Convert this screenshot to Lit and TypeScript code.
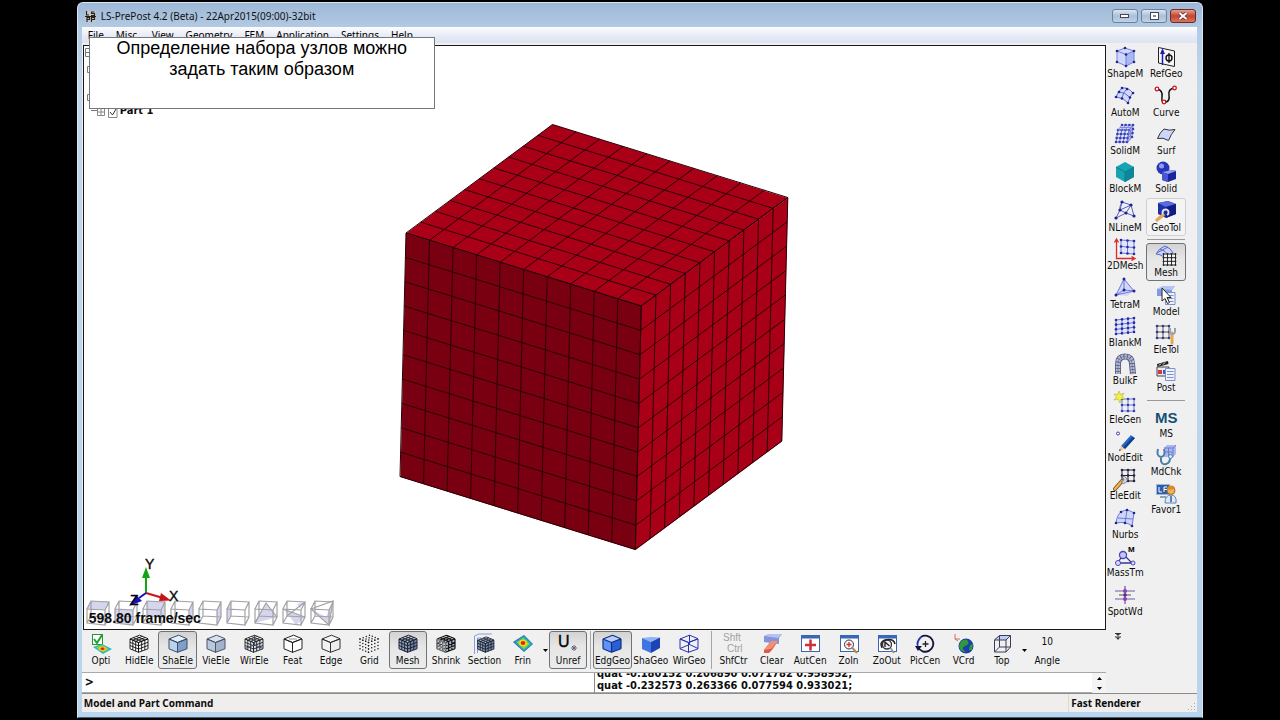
import { LitElement, html, svg, css, nothing } from "lit";
import { customElement, property, query } from "lit/decorators.js";
import { classMap } from "lit/directives/class-map.js";

type Pt = [number, number];

/* Lines of an n by m grid over the parallelogram at o spanned by u and v. */
const mesh = (o: Pt, u: Pt, v: Pt, n: number, m = n): string => {
  const out: string[] = [];
  for (let i = 0; i <= n; i++) {
    const x = o[0] + (u[0] * i) / n, y = o[1] + (u[1] * i) / n;
    out.push(`M${x.toFixed(2)} ${y.toFixed(2)}l${v[0]} ${v[1]}`);
  }
  for (let j = 0; j <= m; j++) {
    const x = o[0] + (v[0] * j) / m, y = o[1] + (v[1] * j) / m;
    out.push(`M${x.toFixed(2)} ${y.toFixed(2)}l${u[0]} ${u[1]}`);
  }
  return out.join("");
};

const dots = (pts: Pt[], fill = "#22228f", r = 1.3) =>
  pts.map((p) => svg`<circle cx=${p[0]} cy=${p[1]} r=${r} fill=${fill} />`);

const gridPts = (o: Pt, u: Pt, v: Pt, n: number, m = n): Pt[] => {
  const out: Pt[] = [];
  for (let i = 0; i <= n; i++)
    for (let j = 0; j <= m; j++)
      out.push([o[0] + (u[0] * i) / n + (v[0] * j) / m, o[1] + (u[1] * i) / n + (v[1] * j) / m]);
  return out;
};

const netIcon = (o: Pt, u: Pt, v: Pt, n: number, m = n, line = "#6d78d8", dot = "#22228f", fill = "none") => svg`
  <path d=${`M${o[0]} ${o[1]}l${u[0]} ${u[1]}l${v[0]} ${v[1]}l${-u[0]} ${-u[1]}z`} fill=${fill} />
  <path d=${mesh(o, u, v, n, m)} fill="none" stroke=${line} />
  ${dots(gridPts(o, u, v, n, m), dot)}`;

const box = (top: string, left: string, right: string, line: string, n = 1, w = 1) => svg`
  <path d="M12.5 3L21 7L11.5 10.5L3 7z" fill=${top} />
  <path d="M3 7L11.5 10.5V20.5L3 16.5z" fill=${left} />
  <path d="M21 7L11.5 10.5V20.5L21 16.5z" fill=${right} />
  <path d=${mesh([3, 7], [8.5, 3.5], [0, 9.8], n) + mesh([11.5, 10.5], [9.5, -3.5], [0, 9.8], n) + mesh([3, 7], [8.5, 3.5], [9.5, -3.8], n)}
    fill="none" stroke=${line} stroke-width=${w} stroke-linejoin="round" />`;

const wrench = svg`<path d="M3 21L10 13" stroke="#7b4c12" stroke-width="4" stroke-linecap="round" />
  <path d="M3 21L10 13" stroke="#f0b45a" stroke-width="2.4" stroke-linecap="round" />
  <path d="M9 14a3.4 3.4 0 1 0 1-5l2 2-1 2z" fill="#d5d9e2" stroke="#667" stroke-width=".8" />`;

const frame = svg`<rect x="3.5" y="3.5" width="18" height="16" fill="#fff" stroke="#3c63ad" />
  <rect x="3" y="3" width="19" height="3.5" fill="#3767b8" />`;

const sheet = svg`<path d="M11.5 9.5h9.5v12h-9.5z" fill="#eef2fd" stroke="#7d91cc" />
  <path d="M13 12.5h6.500M13 15.500h6.500M13 18.500h6.500" stroke="#7d91cc" />`;

const icons: Record<string, unknown> = {
  ShapeM: svg`<path d="M4 6L12 3L21 6V17L13 21L4 17z" fill="#cfd8fb" /><path d="M13 9.500L21 6V17L13 21z" fill="#a9b7f2" />
    <path d="M4 6L12 3L21 6L13 9.500zM4 6V17L13 21L21 17V6M13 9.500V21" fill="none" stroke="#7582dd" />
    ${dots([[4, 6], [12, 3], [21, 6], [13, 9.5], [4, 17], [13, 21], [21, 17]])}`,
  AutoM: svg`<path d="M3 13Q6 6 9 4Q15 3 20 9Q17 11 15 19Q10 13 3 13z" fill="#d0d8fb" />
    <path d="M3 13Q6 6 9 4Q15 3 20 9Q17 11 15 19Q10 13 3 13zM6 8Q12 8 17 13.500M9 14Q10 8 14 5" fill="none" stroke="#5f6acb" />
    ${dots([[3, 13], [9, 4], [20, 9], [15, 19], [6, 8], [14, 5], [9, 14.5], [17, 13.5]])}`,
  SolidM: svg`<path d="M9 3H21L20 14L15 20H3L5 8z" fill="#dfe4fb" />
    ${netIcon([5, 8], [11, 0], [-2, 12], 3, 3, "#6d78d8", "#3a3fb0")}
    <path d=${mesh([5, 8], [11, 0], [4, -5], 3, 2) + mesh([16, 8], [4, -5], [-1, 12], 2, 3)} fill="none" stroke="#6d78d8" stroke-width=".8" />
    ${dots([[9, 3], [12.7, 3], [16.4, 3], [20, 3], [20, 7], [19.5, 11], [19, 15]], "#3a3fb0")}`,
  BlockM: svg`<path d="M12 2L21 7V17L12 22L3 17V7z" fill="#17a4b2" /><path d="M12 12L21 7V17L12 22z" fill="#0d8797" />
    <path d="M3 7L12 12L21 7M12 12V22" fill="none" stroke="#0f7f90" />`,
  NLineM: svg`<path d="M9 3L18 6L21 17L13 14L3 19L7 11zM7 11L18 6M7 11L13 14L18 6M9 3Q6 8 7 11" fill="none" stroke="#5660c8" />
    ${dots([[9, 3], [18, 6], [21, 17], [13, 14], [3, 19], [7, 11]], "#22228f", 1.6)}`,
  "2DMesh": svg`<g transform="translate(1 -1)">${netIcon([7, 4], [13, 1], [0, 13], 2, 2, "#6d78d8", "#2a2aa0", "#e2e6fc")}</g>
    <path d="M3.500 3V21.500H21M1.500 5.500L3.500 2L5.500 5.500M18.500 19.500L22 21.500L18.500 23.500" fill="none" stroke="#e02a2a" stroke-width="1.300" />`,
  TetraM: svg`<path d="M11 3L21 15L14 20L3 19z" fill="#d0d8fb" /><path d="M11 3L3 19L21 15zL11 14L3 19M11 14L21 15" fill="none" stroke="#6d78d8" />
    ${dots([[11, 3], [3, 19], [21, 15], [11, 14]], "#22228f", 1.5)}`,
  BlankM: netIcon([3, 6], [18, -2], [0, 14], 3, 3, "#6d78d8", "#2a2aa0", "#dfe4fb"),
  BulkF: svg`<path d="M5 22L5 12Q5 4.500 12 4.500T19 12L20 22" fill="none" stroke="#55597a" stroke-width="6" />
    <path d="M5 22L5 12Q5 4.500 12 4.500T19 12L20 22" fill="none" stroke="#b3b9d6" stroke-width="4.400" stroke-dasharray="2.200 .8" />
    <path d="M5 22L5 12Q5 4.500 12 4.500T19 12L20 22" fill="none" stroke="#6a6f92" stroke-width=".6" />`,
  EleGen: svg`${netIcon([9, 8], [12, 0], [0, 12], 2, 2, "#6d78d8", "#3a3fb0")}
    <path d="M6 0L7.500 3.500L11 2L9 5.500L12 8L8 8L7 12L5 8L1 9L3.500 6L1 3L5 3.500z" fill="#f3f046" stroke="#a7b13a" stroke-width=".6" />`,
  NodEdit: svg`<path d="M8 17L18 6L22 9L12 20z" fill="#2368c8" /><path d="M10 18.500L20 7.500L22 9L12 20z" fill="#12418c" />
    <path d="M18 6L19.500 4.500L23 7.500L22 9z" fill="#e8eef8" /><path d="M8 17L6 22L12 20z" fill="#f5c98c" /><path d="M6 22l.8-2 1.200 1.300z" fill="#222" />
    <circle cx="5" cy="4.500" r="1.500" fill="#fff" stroke="#3a3fb0" />`,
  EleEdit: svg`${netIcon([9, 3], [12, 0], [0, 11], 2, 2, "#222", "#22224f")}<g transform="translate(-1 1)">${wrench}</g>`,
  Nurbs: svg`<path d="M8 6Q14 2 21 7L19 20Q13 15 3 17Q4 9 8 6z" fill="#ced7fa" /><path d="M8 6Q14 2 21 7L19 20Q13 15 3 17Q4 9 8 6zM5 12L20 13M14 4L12 17" fill="none" stroke="#6d78d8" />
    ${dots([[8, 6], [21, 7], [19, 20], [3, 17], [12, 17], [14, 4]])}`,
  MassTm: svg`<path d="M10 10L5 19H19L10 10" fill="none" stroke="#333a8c" stroke-width="1.300" />
    <circle cx="10" cy="11" r="3.500" fill="#c5c8fb" stroke="#4a42c0" stroke-width="1.300" /><circle cx="5" cy="19" r="2.500" fill="#dcdcff" stroke="#4a42c0" /><circle cx="20" cy="19" r="2" fill="#dcdcff" stroke="#4a42c0" />
    <text x="15" y="8" font-family="Liberation Sans" font-weight="700" font-size="8">M</text>`,
  SpotWd: svg`<path d="M2 8H22M2 16H22" stroke="#9a8fc4" stroke-width="1.500" /><path d="M6 12H18" stroke="#555" />
    <path d="M12 3V21" stroke="#5a2a86" /><circle cx="12" cy="8" r="2" fill="#8a3fb5" /><circle cx="12" cy="12" r="1.800" fill="#5a2a86" /><circle cx="12" cy="16" r="2" fill="#8a3fb5" />`,
  RefGeo: svg`<path d="M4.500 2.500L20.500 6V21.500L4.500 18z" fill="#f6f6f6" stroke="#222" /><path d="M8.500 20V5" stroke="#1c1cb4" stroke-width="1.500" /><path d="M6 9L8.500 3.500L11 9z" fill="#1c1cb4" />
    <ellipse cx="15" cy="13" rx="3" ry="3" fill="none" stroke="#111" stroke-width="1.400" /><path d="M15 8V18" stroke="#111" stroke-width="1.300" />`,
  Curve: svg`<path d="M3 5Q9 6 8 13T12 18Q16 17 15 11T20 4" fill="none" stroke="#111" stroke-width="1.500" />
    ${[[3, 5], [10, 18], [20.5, 4]].map((p) => svg`<circle cx=${p[0]} cy=${p[1]} r="1.800" fill="#fff" stroke="#c4161c" stroke-width="1.300" />`)}`,
  Surf: svg`<path d="M3.500 16.500Q6 10 10 7Q15 9 21 7.500Q17 12 14.500 18.500Q9 15 3.500 16.500z" fill="#cdd5fa" stroke="#333" />`,
  Solid: svg`<circle cx="9" cy="8" r="6.500" fill="#2634b8" /><circle cx="7.500" cy="6" r="2.500" fill="#8f9cf2" />
    <path d="M8 12L19 10L22 11V19L14 22L8 20z" fill="#1a259c" /><path d="M8 12L19 10L22 11L14 14z" fill="#96a2f0" /><path d="M8 12L14 14V22L8 20z" fill="#4756d4" />`,
  GeoTol: svg`<path d="M4 4L14 2L22 5V15L12 19L4 15z" fill="#2230a8" /><path d="M4 4L14 2L22 5L12 8z" fill="#5a6be0" /><path d="M12 8L22 5V15L12 19z" fill="#141d84" />
    <path d="M3 21L9 16" stroke="#e0a958" stroke-width="3.500" stroke-linecap="round" /><path d="M9 15a3 3 0 1 1 4 1" fill="none" stroke="#dfe4f2" stroke-width="2" />`,
  Mesh: svg`<path d="M2 10Q5 4 11 2Q17 4 19 9L10 13Q6 10 2 10z" fill="#cbd4fb" stroke="#5f6acb" /><path d="M6 5Q12 7 14 11M3 9L14 3" fill="none" stroke="#5f6acb" />
    <path d="M9 9.500H22V21.500H9z" fill="#f4f4f8" /><path d=${mesh([9.5, 10], [12, 0], [0, 11], 3)} fill="none" stroke="#333" />${dots(gridPts([9.5, 10], [12, 0], [0, 11], 3), "#222", 0.9)}`,
  Model: svg`<path d="M3 6L9 3H21L18 7V13H3z" fill="#7f9be6" /><path d="M3 6L9 3H21L18 7z" fill="#b5c6f4" />${sheet}
    <path d="M8 5V18L11 15.500L13.500 20.500L15.500 19.500L13 14.500H17z" fill="#fff" stroke="#222" />`,
  EleTol: svg`${netIcon([3, 5], [12, 0], [0, 12], 2, 2, "#555", "#333a8c")}<path d="M18 12V22" stroke="#e2a94f" stroke-width="3" stroke-linecap="round" />
    <path d="M16 7V10.500A2.500 2.500 0 0 0 21 10.500V7" fill="none" stroke="#9aa0b0" stroke-width="2" />`,
  Post: svg`<path d="M3 5L14 2L14.500 5L3.500 8z" fill="#222" /><path d="M5 6.500l2-2M9 5.500l2-2" stroke="#fff" /><path d="M3 8H15V17H3z" fill="#e8e8ee" stroke="#444" />
    <rect x="4" y="11" width="4" height="4" fill="#d43a3a" /><rect x="9" y="11" width="3" height="4" fill="#3a58d4" />${sheet}`,
  MS: svg`<text x="1" y="18" font-family="Liberation Sans" font-weight="700" font-size="15" fill="#16517a">MS</text>`,
  MdChk: svg`<path d="M10 5L13 2H22V11L19 14H10z" fill="#a9b8f0" /><path d="M10 5H19V14M19 5L22 2M14.500 5V14M10 9H19" fill="none" stroke="#6d7bd0" />
    <path d="M4 6Q2 13 7 14Q12 13 10 6M7 14V18Q8 22 12 21T16 15" fill="none" stroke="#4d7fa6" stroke-width="2" /><circle cx="16.500" cy="13.500" r="2" fill="#dbe9f4" stroke="#4d7fa6" />`,
  Favor1: svg`<rect x="2.500" y="3.500" width="13" height="10" fill="#2f5ea8" stroke="#9fb6dc" /><path d="M5 6V11H8M10 11V6H13M10 8.500H13" fill="none" stroke="#fff" />
    <path d="M6 16H12" stroke="#8aa" stroke-width="2" /><path d="M11 22Q11 14 17 14T22 22z" fill="#dfe9f6" stroke="#5e83b8" /><circle cx="17" cy="9.500" r="4" fill="#f2b05a" stroke="#a9671a" /><path d="M13 9Q13 4.500 17 4.500T21 8z" fill="#d88a2a" /><path d="M17 15V21" stroke="#2f5ea8" stroke-width="1.500" />`,

  Opti: svg`<rect x="3.500" y="2.500" width="10" height="10" fill="#fff" stroke="#2c8f3c" /><path d="M5 7L8 11L13 3" fill="none" stroke="#1fa52e" stroke-width="2" />
    <path d="M4 15L13 12L23 17L14 22z" fill="#25b8c8" /><path d="M7 15.500L13 13L20 17L14 20.500z" fill="#7ddc3a" /><ellipse cx="13.500" cy="16.800" rx="4" ry="2.200" fill="#f6c31c" /><ellipse cx="13.500" cy="16.800" rx="2" ry="1.200" fill="#e0261c" />`,
  HidEle: box("#fff", "#fff", "#fff", "#111", 3, 0.9),
  ShaEle: box("#e4effc", "#bcd3ef", "#7d9fca", "#3c4c66"),
  VieEle: box("#d9e3f0", "#b9c8dc", "#a2b4cd", "#4a5466"),
  WirEle: svg`${box("#fff", "#e4e8f0", "#d4dae8", "#222", 3, 0.9)}<path d="M3 16.500L12.500 13L21 16.500M12.500 3V13" fill="none" stroke="#44506e" />`,
  Feat: svg`${box("#fff", "#fff", "#fff", "#222")}<path d="M8 7H16" stroke="#777" stroke-width=".8" />`,
  Edge: box("#f6f6f6", "#f2f2f2", "#eee", "#333"),
  Grid: svg`${dots([...gridPts([3, 7], [8.5, 3.5], [0, 9.8], 3), ...gridPts([11.5, 10.5], [9.5, -3.5], [0, 9.8], 3), ...gridPts([3, 7], [8.5, 3.5], [9.5, -3.8], 3)], "#1a1a1a", 0.75)}`,
  MeshView: box("#cfd6e2", "#93a3bd", "#7487a8", "#1c2434", 3),
  Shrink: svg`${box("#e8ebf0", "#c4cad6", "#aab3c4", "#111", 3, 1.2)}<path d=${mesh([3, 7], [8.5, 3.5], [0, 9.8], 3)} fill="none" stroke="#fff" stroke-width=".4" />`,
  Section: svg`<path d="M2.500 22V4L7 2H20M5.500 21V6H9M2.500 4V22" fill="none" stroke="#8f9ad8" /><g transform="translate(3 2) scale(.9)">${box("#cfd6e2", "#93a3bd", "#7487a8", "#1c2434", 3)}</g>`,
  Frin: svg`<path d="M2 10L13 3L22 12L13 20z" fill="#2d62d4" /><path d="M3.500 10L13 4L21 12L13 19z" fill="#22b5a5" /><path d="M6 10.500L12.500 6L18.500 12L13 17z" fill="#8fdc2e" /><ellipse cx="12" cy="11" rx="4" ry="3.300" fill="#f7d51d" /><ellipse cx="12" cy="11" rx="2.300" ry="1.900" fill="#e1251b" />`,
  Unref: svg`<text x="2" y="15" font-family="Liberation Sans" font-size="16" stroke="#111" stroke-width=".4">U</text><path d="M18 13V19M15 16H21M16 14L20 18M20 14L16 18" stroke="#667" />`,
  EdgGeo: box("#b7ccff", "#5f92fa", "#2b5fd8", "#13307e", 1, 1.2),
  ShaGeo: svg`<g transform="translate(0 1)"><path d="M3 5L12 4L21 4.500L12 9z" fill="#8fb2f6" /><path d="M3 5L12 9V20L3 16z" fill="#3f74e2" /><path d="M21 4.500L12 9V20L21 15z" fill="#1c45b4" /></g>`,
  WirGeo: svg`${box("none", "none", "none", "#2733b4")}<path d="M3 16.500L12.500 12.500L21 16.500M12.500 3V12.500" fill="none" stroke="#2733b4" />`,
  ShfCtr: svg`<g font-family="Liberation Sans" font-size="10" fill="#a2a2a2"><text x="2" y="9">Shft</text><text x="6" y="20">Ctrl</text></g>`,
  Clear: svg`<path d="M4 4L9 2H22L19 6V12L4 10z" fill="#8294dc" /><path d="M4 4L9 2H22L18 6z" fill="#b6c2f0" /><path d="M4 18L11 9H18L12 18L9 21H4z" fill="#e0583e" /><path d="M4 18L11 9H18L11 17z" fill="#f09078" />`,
  AutCen: svg`${frame}<path d="M12.500 7.500V18.500M7 13H18" stroke="#d22c38" stroke-width="2.500" />`,
  ZoIn: svg`${frame}<circle cx="12" cy="12.500" r="4.500" fill="#f8f8ff" stroke="#333" /><path d="M12 10V15M9.500 12.500H14.500" stroke="#d22c38" stroke-width="1.300" /><path d="M15.500 16L20 21" stroke="#b88948" stroke-width="2" />`,
  ZoOut: svg`${frame}<circle cx="12" cy="12.500" r="4.500" fill="#eef" stroke="#333" stroke-width="1.300" /><path d="M7 16Q4 10 10 8Q19 6 20 12" fill="none" stroke="#222" stroke-width="1.600" /><path d="M10 15V10L14.500 14" fill="none" stroke="#222" stroke-width="1.400" /><path d="M15.500 16L19 21" stroke="#999" stroke-width="2" />`,
  PicCen: svg`<path d="M5 15A8 8 0 1 0 8 5" fill="none" stroke="#15153c" stroke-width="1.800" /><path d="M5 15Q3 10 8 5" fill="none" stroke="#2733b4" stroke-width="1.800" /><path d="M2 14H9L5 19z" fill="#15153c" /><path d="M12.500 9V15M9.500 12H15.500" stroke="#222" stroke-width="1.300" />`,
  VCrd: svg`<path d="M3 2V7H8M3 7L6 9" fill="none" stroke="#e0685c" /><circle cx="14" cy="14" r="7.500" fill="#1a3fa8" /><path d="M9 9Q14 6 16 9T13 14T14 20Q8 20 7 14zM18 13L21 12L20 18L17 18z" fill="#2f9a3c" />`,
  Top: svg`<path d="M4 7L10 3H20L16 8H4z" fill="#c2cbf6" /><path d="M4.500 8H16V20H4.500zM4.500 8L9.500 3.500H20.500L16 8M20.500 3.500V15L16 20M9.500 3.500V15H20.500M9.500 15L4.500 20" fill="none" stroke="#3a3f58" />`,
};

@customElement("tool-button")
class ToolButton extends LitElement {
  @property() label = "";
  @property() icon = "";
  @property({ type: Boolean }) active = false;
  @property({ type: Boolean }) hover = false;

  static styles = css`
    :host { display: block; min-width: 0; }
    .tool {
      box-sizing: border-box; width: 100%; height: 100%; margin: 0; padding: 0 0 2px;
      display: flex; flex-direction: column; align-items: center; justify-content: center;
      border: 1px solid transparent; border-radius: 3px; background: none; color: #0c0c0c;
      font: 10px/10px "DejaVu Sans Condensed", "DejaVu Sans", sans-serif; font-stretch: condensed; white-space: nowrap;
    }
    .icon { width: 24px; height: 24px; flex: none; }
    .active { border-color: #6f7276; background: linear-gradient(#d3d3d3, #e6e6e6 40%, #ececec); }
    .hover { border-color: #cfcfcf; background: #f4f4f4; }
    .number { font: inherit; height: 24px; line-height: 20px; }
  `;

  render() {
    const art = icons[this.icon || this.label];
    return html`<button class=${classMap({ tool: true, active: this.active, hover: this.hover })}>
      ${art
        ? html`<svg class="icon" viewBox="0 0 24 24" aria-hidden="true">${art}</svg>`
        : html`<span class="number">10</span>`}
      <span>${this.label}</span>
    </button>`;
  }
}

@customElement("app-root")
class AppRoot extends LitElement {
  @query(".log") log!: HTMLTextAreaElement;

  static styles = css`
    :host { display: block; height: 100vh; background: #000; color: #0c0c0c; --pitch: calc((100vh - 144px) / 15); }
    * { box-sizing: border-box; }
    button { font: inherit; }
    .stage { height: 100%; padding: 2px 6%; position: relative; }
    .window {
      height: 100%; display: flex; flex-direction: column; padding: 0 5px 5px 4px; border-radius: 6px 6px 0 0;
      background: linear-gradient(#9db8d6, #b4cbe4 26px, #c3d6ea 80px, #b9d4ec); border: 1px solid #d7e6f3; border-bottom-color: #48607a;
    }
    .titlebar { flex: none; height: 24px; display: flex; align-items: center; gap: 5px; padding: 2px 1px 0 3px; font: 10px/16px "Noto Sans", sans-serif; color: #111; }
    .title { flex: 1; }
    .logo { width: 11px; height: 11px; }
    .controls { display: flex; gap: 3px; }
    .control { width: 26px; height: 14px; padding: 0; border: 1px solid #6b819c; border-radius: 3px; background: linear-gradient(#dbe7f3, #a9c0d8 50%, #bfd2e6); display: grid; place-items: center; }
    .close { background: linear-gradient(#e3a195, #c4452f 50%, #d87660); border-color: #6d2a24; }
    .menus { flex: none; height: 16px; display: flex; gap: 12px; padding: 0 6px; background: linear-gradient(#fdfdfe, #e6eaf6 60%, #dde3f1); font: 10px/16px "Noto Sans", sans-serif; }
    .menus button { border: 0; padding: 0; background: none; line-height: 16px; }
    .body { flex: 1; min-height: 0; display: grid; grid-template-columns: 1fr 91px; background: #f0f0f0; }
    .work { min-width: 0; min-height: 0; display: flex; flex-direction: column; padding-top: 2px; }
    .viewport { flex: 1; min-height: 0; margin-left: 1px; position: relative; display: grid; place-items: center; background: #fff; border: 1px solid #1a1a1a; overflow: hidden; }
    .solid { height: 432px; max-height: 90%; }
    .axes { position: absolute; left: 41px; bottom: 17px; width: 60px; height: 56px; }
    .tree { position: absolute; left: 0; top: 0; width: 40px; height: 76px; }
    .part { position: absolute; left: 36px; top: 57px; font: 700 11px/16px "DejaVu Sans Condensed", "DejaVu Sans", sans-serif; font-stretch: condensed; white-space: nowrap; }
    .views { position: absolute; left: 1px; bottom: 2px; display: flex; gap: 2px; }
    .views button { width: 26px; height: 28px; padding: 0; border: 0; background: none; }
    .fps { position: absolute; left: 5px; bottom: 3px; font: 700 14px/16px "Liberation Sans", sans-serif; }
    .bar { flex: none; height: 42px; display: flex; padding: 1px 40px 3px 0; }
    .bar tool-button { flex: 1 1 0; }
    .drop { flex: none; width: 7px; padding: 0; border: 0; background: none; display: grid; place-items: center; }
    .rule { flex: none; width: 6px; display: grid; justify-content: center; }
    .rule i { width: 1px; background: #a6a6a6; }
    .command { flex: none; height: 21px; display: grid; grid-template-columns: 1fr 1fr; border-top: 1px solid #a9a9a9; border-bottom: 1px solid #a9a9a9; background: #fff; }
    .prompt { display: flex; align-items: center; min-width: 0; padding: 0 0 2px 3px; gap: 3px; font: 700 12px/16px "DejaVu Sans Condensed", "DejaVu Sans", sans-serif; }
    .prompt input { flex: 1; min-width: 0; border: 0; outline: 0; background: none; font: inherit; }
    .output { display: flex; border-left: 1px solid #8c8c8c; min-width: 0; }
    .log { flex: 1; min-width: 0; height: 19px; resize: none; border: 0; outline: 0; padding: 0 2px; overflow: hidden; background: #fff; color: #0c0c0c; white-space: pre; font: 700 11px/12px "DejaVu Sans Condensed", "DejaVu Sans", sans-serif; font-stretch: condensed; }
    .spin { width: 14px; display: grid; background: #f4f4f4; }
    .spin button { border: 0; padding: 0; background: none; display: grid; place-items: center; }
    .status { flex: none; height: 19px; display: flex; align-items: center; padding: 0 2px; border-top: 1px solid #8c8c8c; background: #f0eeec; font: 700 10px/18px "Noto Sans", sans-serif; position: relative; }
    .status-main { flex: 1; }
    .status-side { width: 127px; padding-left: 2px; border-left: 1px solid #d9d9d9; }
    .grip { position: absolute; right: 1px; bottom: 1px; width: 8px; height: 8px; }
    .side { display: grid; grid-template-columns: 38px 40px; gap: 2px; align-content: start; padding-top: 1px; }
    .column { display: flex; flex-direction: column; }
    .column tool-button { height: var(--pitch); flex: none; }
    .hrule { height: 7px; display: grid; align-items: center; }
    .hrule i { height: 1px; background: #9a9a9a; margin: 0 1px; }
    .more { border: 0; background: none; padding: 12px 0 0; width: 24px; }
    .more svg { display: block; margin: 0 auto; }
    .note {
      position: absolute; left: calc(6% + 12px); top: 37px; width: 346px; height: 72px; margin: 0; padding: 0 20px;
      border: 1px solid #777; background: #fff; color: #000; text-align: center; font: 18px/21px "Liberation Sans", sans-serif;
    }
  `;

  firstUpdated() {
    this.log.scrollTop = this.log.scrollHeight;
  }

  private tools(names: string[], active: string[] = [], hover = "") {
    return names.map((n) => {
      if (n === "|") return html`<span class="rule"><i></i></span>`;
      if (n === "-") return html`<span class="hrule"><i></i></span>`;
      if (n === "v")
        return html`<button class="drop" aria-label="More"><svg width="5" height="3"><path d="M0 0H5L2.500 3z" /></svg></button>`;
      const [label, icon] = n.split(":");
      return html`<tool-button label=${label} icon=${icon ?? ""} ?active=${active.includes(label)} ?hover=${hover === label}></tool-button>`;
    });
  }

  private model() {
    const r: Pt = [146.5, -108.5], f: Pt = [235.3, 73], d: Pt = [-6, 243.5];
    return html`<svg class="solid" viewBox="399 122 392 432" role="img" aria-label="Part 1">
      <path d="M406 233.500L552.500 124.500L788 198L641.500 306z" fill="#a90018" />
      <path d="M406 233.500L641.500 306L635.500 550L400.500 477z" fill="#790011" />
      <path d="M641.500 306L788 198L782 441.500L635.500 550z" fill="#a80017" />
      <path d=${mesh([406, 233], r, f, 10) + mesh([406, 233], f, d, 10) + mesh([641.3, 306], r, d, 10)} fill="none" stroke="#2a0006" stroke-width="1" />
    </svg>`;
  }

  private views() {
    const shade = [
      "M3 10L7 2H25L21 11z", "M3 10V24L21 26V11z", "M7 2H25V18L7 17z", "M21 11L25 2V18L21 26z", "M21 11L25 2V18L21 26z",
      "M3 10L7 2V17L3 24z", "M3 24L14 4L25 18z", "M3 10L25 18L16 26L7 14zM17 5L24 3L20 9z", "M3 10L21 25L25 2L18 18z",
    ];
    return shade.map(
      (s, i) => html`<button aria-label=${`View ${i + 1}`}><svg width="26" height="28" viewBox="2 0 24 28">
        <path d=${s} fill="#d5d5ee" />
        <path d="M3 10L21 11V26L3 24zM3 10L7 2L25 3L21 11M25 3V18L21 26M7 2V17L25 18M7 17L3 24" fill="none" stroke="#a2a2a6" stroke-width="1.200" />
        ${i > 5 ? svg`<path d=${["M3 24L14 4L25 18", "M3 10L25 18M7 17L25 3", "M3 10L25 2L21 26z"][i - 6]} fill="none" stroke="#a2a2a6" stroke-width="1.200" />` : nothing}
      </svg></button>`
    );
  }

  render() {
    return html`<div class="stage">
      <div class="window">
        <header class="titlebar">
          <svg class="logo" viewBox="0 0 11 11" aria-hidden="true"><path d="M0 0H11V11H0z" fill="#c9c9c4" /><path d="M1.500 0V4H4M9.500 1H6.500V2.500H9.500V4.500H6M2 11V6.500H4.500V8.500H2M6.500 11V6.500H9.500V8.500H6.500M0 5.500H11" fill="none" stroke="#222" stroke-width="1.200" /></svg>
          <span class="title">LS-PrePost 4.2 (Beta) - 22Apr2015(09:00)-32bit</span>
          <div class="controls">
            <button class="control" aria-label="Minimize"><svg width="10" height="6"><rect x=".5" y="1.500" width="8" height="3" fill="#fff" stroke="#445" /></svg></button>
            <button class="control" aria-label="Maximize"><svg width="9" height="8"><rect x=".5" y=".5" width="8" height="7" fill="#fff" stroke="#445" /><rect x="3" y="3" width="3" height="2" fill="#889" /></svg></button>
            <button class="control close" aria-label="Close"><svg width="10" height="8"><path d="M1.500 1L8.500 7M8.500 1L1.500 7" stroke="#5a3030" stroke-width="3.500" /><path d="M1.500 1L8.500 7M8.500 1L1.500 7" stroke="#fff" stroke-width="2" /></svg></button>
          </div>
        </header>
        <nav class="menus">
          ${["File", "Misc.", "View", "Geometry", "FEM", "Application", "Settings", "Help"].map((m) => html`<button>${m}</button>`)}
        </nav>
        <div class="body">
          <main class="work">
            <section class="viewport">
              ${this.model()}
              <svg class="tree" viewBox="0 0 40 76" aria-hidden="true">
                <path d="M1.500 2.500H8M1.500 6.500H8M1.500 2.500V10.500H8M3.500 20.500H8V26.500H3.500zM3.500 48.500H8V54.500H3.500zM7 64.500H14" fill="none" stroke="#777" />
                <path d="M13.500 62.500H20.500V69.500H13.500zM17 63V69M14 66H20M24.500 63V71.500H33V63" fill="none" stroke="#888" /><path d="M26 66L28.500 69L32 63" fill="none" stroke="#333" />
              </svg>
              <span class="part">Part 1</span>
              <div class="views">${this.views()}</div>
              <svg class="axes" viewBox="0 0 60 56" aria-hidden="true">
                <path d="M21 37V20" stroke="#12a512" stroke-width="2" /><path d="M17 22L21 11L25 22z" fill="#12a512" />
                <path d="M21 37L38 42" stroke="#c81414" stroke-width="2" /><path d="M36 37L46 44.500L34 45z" fill="#c81414" />
                <path d="M21 37L14 42" stroke="#1414b4" stroke-width="2" /><path d="M4 50L11 39L17 45z" fill="#1414b4" />
                <g font-family="Liberation Sans" font-size="14" stroke="#111" stroke-width=".4"><text x="20" y="13">Y</text><text x="44" y="45">X</text><text x="5" y="49">Z</text></g>
              </svg>
              <span class="fps">598.80 frame/sec</span>
            </section>
            <div class="bar">
              ${this.tools(
                ["Opti", "HidEle", "ShaEle", "VieEle", "WirEle", "Feat", "Edge", "Grid", "Mesh:MeshView", "Shrink", "Section", "Frin", "v", "Unref", "|",
                  "EdgGeo", "ShaGeo", "WirGeo", "|", "ShfCtr", "Clear", "AutCen", "ZoIn", "ZoOut", "PicCen", "VCrd", "Top", "v", "Angle"],
                ["ShaEle", "Mesh", "Unref", "EdgGeo"]
              )}
            </div>
            <div class="command">
              <label class="prompt">&gt;<input type="text" aria-label="Command" /></label>
              <div class="output">
                <textarea class="log" readonly aria-label="Command log" .value=${"quat -0.180152 0.206890 0.071782 0.958952;\nquat -0.232573 0.263366 0.077594 0.933021;"}></textarea>
                <div class="spin">
                  <button aria-label="Scroll up"><svg width="5" height="3"><path d="M0 3H5L2.500 0z" /></svg></button>
                  <button aria-label="Scroll down"><svg width="5" height="3"><path d="M0 0H5L2.500 3z" /></svg></button>
                </div>
              </div>
            </div>
          </main>
          <aside class="side">
            <div class="column">
              ${this.tools(["ShapeM", "AutoM", "SolidM", "BlockM", "NLineM", "2DMesh", "TetraM", "BlankM", "BulkF", "EleGen", "NodEdit", "EleEdit", "Nurbs", "MassTm", "SpotWd"])}
              <button class="more" aria-label="More tools"><svg width="6" height="8"><path d="M0 1.500H6M0 5H6" stroke="#333" /><path d="M1 2H5L3 4zM1 5.500H5L3 8z" fill="#333" /></svg></button>
            </div>
            <div class="column">
              ${this.tools(["RefGeo", "Curve", "Surf", "Solid", "GeoTol", "-", "Mesh", "Model", "EleTol", "Post", "-", "MS", "MdChk", "Favor1"], ["Mesh"], "GeoTol")}
            </div>
          </aside>
        </div>
        <footer class="status">
          <span class="status-main">Model and Part Command</span>
          <span class="status-side">Fast Renderer</span>
          <svg class="grip" viewBox="0 0 8 8" aria-hidden="true"><path d="M6 0h1v1h-1zM3 3h1v1h-1zM6 3h1v1h-1zM0 6h1v1h-1zM3 6h1v1h-1zM6 6h1v1h-1z" fill="#aaa" /></svg>
        </footer>
      </div>
      <p class="note">Определение набора узлов можно задать таким образом</p>
    </div>`;
  }
}
